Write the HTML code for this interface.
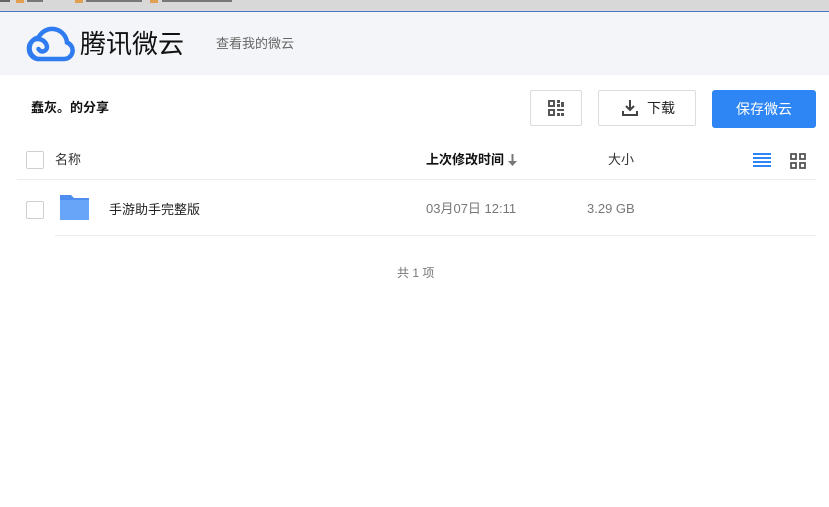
<!DOCTYPE html>
<html><head><meta charset="utf-8"><style>
*{margin:0;padding:0;box-sizing:border-box}
body{width:829px;height:507px;background:#fff;font-family:"Liberation Sans","Noto Sans CJK SC",sans-serif;position:relative;overflow:hidden;color:#222}
.a{position:absolute}
.cb{position:absolute;width:18px;height:18px;border:1px solid #d0d0d0;border-radius:2px;background:#fff}
</style></head><body>
<div class="a" style="left:0;top:0;width:829px;height:11px;background:#d8d8d8"></div>
<div class="a" style="left:0;top:0;width:10px;height:2px;background:#666"></div>
<div class="a" style="left:16px;top:0;width:8px;height:3px;background:#e0a050"></div>
<div class="a" style="left:27px;top:0;width:16px;height:2px;background:#777"></div>
<div class="a" style="left:75px;top:0;width:8px;height:3px;background:#e0a050"></div>
<div class="a" style="left:86px;top:0;width:56px;height:2px;background:#777"></div>
<div class="a" style="left:150px;top:0;width:8px;height:3px;background:#e0a050"></div>
<div class="a" style="left:162px;top:0;width:70px;height:2px;background:#777"></div>
<div class="a" style="left:0;top:11px;width:829px;height:1px;background:#4a72c8"></div>
<div class="a" style="left:0;top:12px;width:829px;height:63px;background:#f3f5f8"></div>
<svg class="a" style="left:25px;top:25px" width="50" height="37" viewBox="0 0 50 37">
<path d="M13 34 H39 A8.5 8.5 0 0 0 42 17.5 A15 15 0 0 0 13.5 12.5 A11 11 0 0 0 13 34" fill="none" stroke="#2f7bf0" stroke-width="4.5"/>
<path d="M13 34 A10 10 0 0 1 4 24 A9 9 0 0 1 22 22 A4.5 4.5 0 0 1 13.5 24" fill="none" stroke="#2f7bf0" stroke-width="4.5" stroke-linecap="round"/>
</svg>
<div class="a" style="left:80px;top:27px;font-size:26px;line-height:34px;color:#111">腾讯微云</div>
<div class="a" style="left:216px;top:35px;font-size:13px;line-height:18px;color:#666">查看我的微云</div>
<div class="a" style="left:31px;top:99px;font-size:13px;line-height:18px;font-weight:bold;color:#111">蠢灰。的分享</div>
<div class="a" style="left:530px;top:90px;width:52px;height:36px;border:1px solid #ddd;border-radius:2px;background:#fff"></div>
<svg class="a" style="left:547px;top:99px" width="18" height="18" viewBox="0 0 18 18" fill="#555">
<path d="M1 1h7v7H1zM3 3v3h3V3z" fill-rule="evenodd"/><rect x="10" y="1" width="3" height="3"/><rect x="10" y="5" width="3" height="3"/><rect x="14" y="3" width="3" height="5"/>
<path d="M1 10h7v7H1zM3 12v3h3v-3z" fill-rule="evenodd"/><rect x="10" y="10" width="7" height="2"/><rect x="10" y="14" width="3" height="3"/><rect x="14" y="14" width="3" height="3"/>
</svg>
<div class="a" style="left:598px;top:90px;width:98px;height:36px;border:1px solid #ddd;border-radius:2px;background:#fff"></div>
<svg class="a" style="left:621px;top:99px" width="18" height="18" viewBox="0 0 18 18">
<path d="M9 1v10M5 7l4 4 4-4" fill="none" stroke="#444" stroke-width="2"/><path d="M2 12v4h14v-4" fill="none" stroke="#444" stroke-width="2"/>
</svg>
<div class="a" style="left:647px;top:98px;font-size:14px;line-height:20px;color:#222">下载</div>
<div class="a" style="left:712px;top:90px;width:104px;height:38px;background:#2e86f5;border-radius:3px;color:#fff;font-size:14px;line-height:38px;text-align:center">保存微云</div>
<div class="cb" style="left:26px;top:151px"></div>
<div class="a" style="left:55px;top:151px;font-size:13px;line-height:18px;color:#333">名称</div>
<div class="a" style="left:426px;top:151px;font-size:13px;line-height:18px;color:#111;font-weight:bold">上次修改时间</div>
<svg class="a" style="left:508px;top:154px" width="9" height="12" viewBox="0 0 9 12"><path d="M4.5 0v8" stroke="#777" stroke-width="2"/><path d="M0 7h9l-4.5 5z" fill="#777"/></svg>
<div class="a" style="left:608px;top:151px;font-size:13px;line-height:18px;color:#333">大小</div>
<svg class="a" style="left:753px;top:153px" width="18" height="15" viewBox="0 0 18 15" fill="#2e86f5"><rect y="0" width="18" height="2"/><rect y="4" width="18" height="2"/><rect y="8" width="18" height="2"/><rect y="12" width="18" height="2"/></svg>
<svg class="a" style="left:790px;top:153px" width="16" height="16" viewBox="0 0 16 16" fill="none" stroke="#555" stroke-width="1.8"><rect x="1" y="1" width="5" height="5"/><rect x="10" y="1" width="5" height="5"/><rect x="1" y="10" width="5" height="5"/><rect x="10" y="10" width="5" height="5"/></svg>
<div class="a" style="left:17px;top:179px;width:799px;height:1px;background:#ececec"></div>
<div class="cb" style="left:26px;top:201px"></div>
<svg class="a" style="left:60px;top:195px" width="29" height="25" viewBox="0 0 29 25"><path d="M0 0h11l3 3h15v22H0z" fill="#4d8ef0"/><rect y="5" width="29" height="20" fill="#68a4f8"/></svg>
<div class="a" style="left:109px;top:201px;font-size:13px;line-height:18px;color:#222">手游助手完整版</div>
<div class="a" style="left:426px;top:200px;font-size:13px;line-height:18px;color:#777">03月07日 12:11</div>
<div class="a" style="left:587px;top:200px;font-size:13px;line-height:18px;color:#777">3.29 GB</div>
<div class="a" style="left:55px;top:235px;width:761px;height:1px;background:#ececec"></div>
<div class="a" style="left:397px;top:265px;font-size:12px;line-height:17px;color:#777">共 1 项</div>
</body></html>
